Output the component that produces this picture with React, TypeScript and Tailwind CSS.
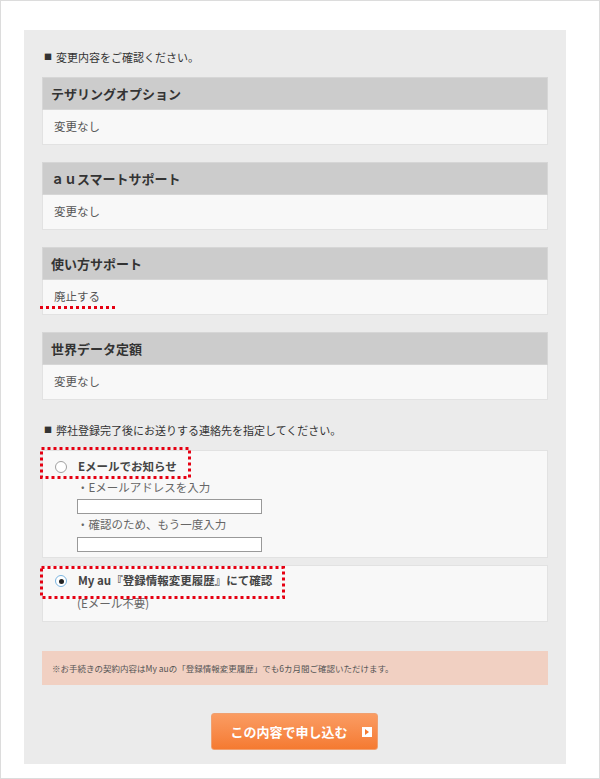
import React from 'react';

const FONT = '"Noto Sans CJK JP", "Noto Sans", "Liberation Sans", sans-serif';

const CARDS = [
  { title: 'テザリングオプション', value: '変更なし' },
  { title: 'ａｕスマートサポート', value: '変更なし' },
  { title: '使い方サポート', value: '廃止する' },
  { title: '世界データ定額', value: '変更なし' },
];

function Card({ title, value }: { title: string; value: string }) {
  return (
    <div className="mb-[17px]">
      <div className="h-[33px] bg-[#cccccc] border border-[#d6d6d6] flex items-center pl-[8px] text-[13px] font-bold text-[#333]">
        {title}
      </div>
      <div className="h-[35px] bg-[#f8f8f8] border border-t-0 border-[#e2e2e2] flex items-center pl-[11px] text-[11.5px] text-[#555]">
        {value}
      </div>
    </div>
  );
}

function Radio({ checked }: { checked?: boolean }) {
  if (checked) {
    return (
      <span className="w-[12px] h-[12px] rounded-full border border-[#7ab4e0] bg-white flex items-center justify-center">
        <span className="w-[5px] h-[5px] rounded-full bg-[#222]" />
      </span>
    );
  }
  return <span className="w-[12px] h-[12px] rounded-full border border-[#a0a0a0] bg-white" />;
}

function Dotted({ x, y, w, h }: { x: number; y: number; w: number; h: number }) {
  return (
    <svg className="absolute" style={{ left: x, top: y }} width={w} height={h}>
      <rect x={1.5} y={1.5} width={w - 3} height={h - 3} fill="none" stroke="#e60012" strokeWidth={3} strokeDasharray="3 3" />
    </svg>
  );
}

export default function App() {
  return (
    <div className="relative w-[600px] h-[779px] bg-white border border-[#dcdcdc] pt-[29px] pl-[23px]" style={{ fontFamily: FONT }}>
      <div className="w-[542px] h-[734px] bg-[#ebebeb] px-[18px] pt-[19px]">
        <div className="h-[16px] flex items-center text-[11px] text-[#333] mb-[12px]">
          <span className="text-[8px] mr-[4px] ml-[2px]">■</span>変更内容をご確認ください。
        </div>

        {CARDS.map((c) => (
          <Card key={c.title} title={c.title} value={c.value} />
        ))}

        <div className="h-[16px] flex items-center text-[11px] text-[#333] mt-[22px] mb-[12px]">
          <span className="text-[8px] mr-[4px] ml-[2px]">■</span>弊社登録完了後にお送りする連絡先を指定してください。
        </div>

        <div className="h-[108px] bg-[#f8f8f8] border border-[#e2e2e2] pl-[12px] pt-[9px]">
          <div className="flex items-center h-[14px] gap-[11px]">
            <Radio />
            <span className="text-[11.5px] font-bold text-[#444]">Eメールでお知らせ</span>
          </div>
          <div className="pl-[22px] mt-[6px] text-[11.5px] text-[#666]">
            <div className="h-[16px] flex items-center">・Eメールアドレスを入力</div>
            <div className="w-[185px] h-[15px] border border-[#999] bg-white mt-[3px]" />
            <div className="h-[16px] flex items-center mt-[3px]">・確認のため、もう一度入力</div>
            <div className="w-[185px] h-[15px] border border-[#999] bg-white mt-[4px]" />
          </div>
        </div>

        <div className="h-[57px] bg-[#f8f8f8] border border-[#e2e2e2] pl-[12px] pt-[8px] mt-[7px]">
          <div className="flex items-center h-[14px] gap-[11px]">
            <Radio checked />
            <span className="text-[11.5px] font-bold text-[#444]">My au『登録情報変更履歴』にて確認</span>
          </div>
          <div className="pl-[22px] mt-[8px] h-[16px] flex items-center text-[11.5px] text-[#666]">(Eメール不要)</div>
        </div>

        <div className="h-[34px] bg-[#f1d0c2] mt-[29px] flex items-center pl-[10px] text-[8.5px] text-[#555]">
          ※お手続きの契約内容はMy auの「登録情報変更履歴」でも6カ月間ご確認いただけます。
        </div>

        <div className="flex justify-center mt-[28px] pr-[2px]">
          <div className="w-[167px] h-[37px] rounded-[3px] bg-gradient-to-b from-[#fa9c62] to-[#f57a30] border border-[#f0a070] flex items-center pl-[19px] gap-[14px] text-white text-[13px] font-bold">
            <span>この内容で申し込む</span>
            <span className="w-[10px] h-[10px] bg-white flex items-center justify-center">
              <span className="w-0 h-0 border-y-[3px] border-y-transparent border-l-[4px] border-l-[#f57a30]" />
            </span>
          </div>
        </div>
      </div>

      <svg className="absolute" style={{ left: 39, top: 305 }} width={78} height={4}>
        <line x1={0} y1={1.5} x2={78} y2={1.5} stroke="#e60012" strokeWidth={3} strokeDasharray="3 3" />
      </svg>
      <Dotted x={39} y={446} w={151} h={32} />
      <Dotted x={39} y={565} w={245} h={33} />
    </div>
  );
}
